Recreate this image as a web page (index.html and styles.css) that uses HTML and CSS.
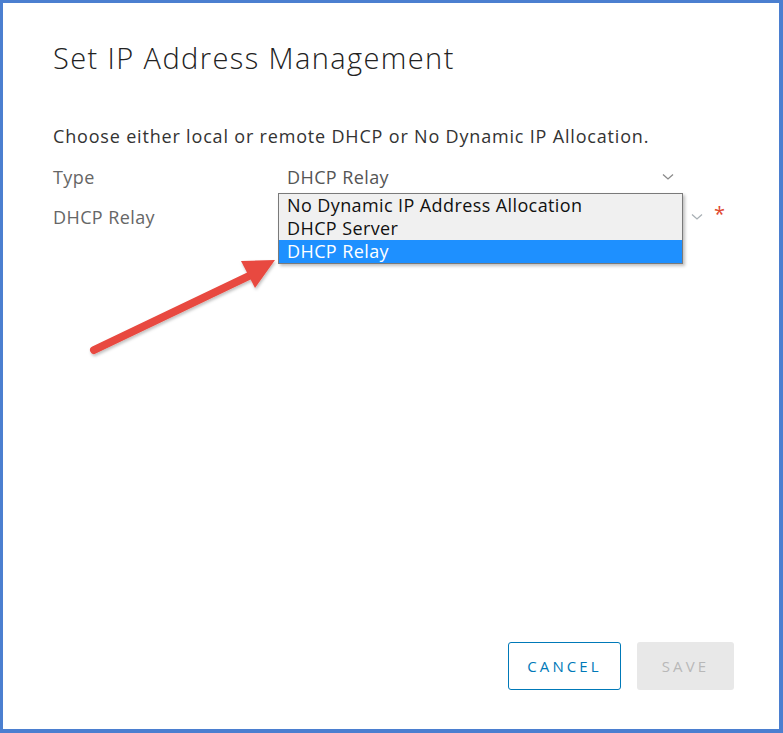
FILE: index.html
```html
<!DOCTYPE html>
<html>
<head>
<meta charset="utf-8">
<link rel="stylesheet" href="styles.css">
</head>
<body>
<div class="window">
  <h1 class="title">Set IP Address Management</h1>
  <p class="intro">Choose either local or remote DHCP or No Dynamic IP Allocation.</p>
  <div class="form">
    <div class="row">
      <span class="label">Type</span>
      <div class="select select-type">
        <span class="value">DHCP Relay</span>
        <svg class="chev" width="12" height="8" viewBox="0 0 12 8"><path d="M1 1.5 L6 6 L11 1.5" fill="none" stroke="#8a8a8a" stroke-width="1.3"/></svg>
      </div>
    </div>
    <div class="row">
      <span class="label">DHCP Relay</span>
      <div class="select select-relay">
        <span class="value"></span>
        <svg class="chev" width="12" height="8" viewBox="0 0 12 8"><path d="M1 1.5 L6 6 L11 1.5" fill="none" stroke="#a9b0b5" stroke-width="1.3"/></svg>
      </div>
      <span class="req">*</span>
    </div>
    <ul class="dropdown">
      <li>No Dynamic IP Address Allocation</li>
      <li>DHCP Server</li>
      <li class="sel">DHCP Relay</li>
    </ul>
  </div>
  <svg class="arrow" width="210" height="110" viewBox="0 0 210 110">
    <defs>
      <filter id="sh" x="-20%" y="-20%" width="140%" height="140%">
        <feDropShadow dx="1" dy="2" stdDeviation="1.5" flood-color="#000" flood-opacity="0.25"/>
      </filter>
    </defs>
    <g filter="url(#sh)">
      <line x1="21" y1="97" x2="178" y2="22" stroke="#e8483f" stroke-width="8" stroke-linecap="round"/>
      <polygon points="168,8 202,7 182,35" fill="#e8483f"/>
    </g>
  </svg>
  <div class="actions">
    <button class="btn cancel">CANCEL</button>
    <button class="btn save">SAVE</button>
  </div>
</div>
</body>
</html>
```
FILE: styles.css
```css
* { box-sizing: border-box; }
html, body { margin: 0; padding: 0; background: #fff; }
body { font-family: "Open Sans", "Lato", sans-serif; }
.window {
  position: relative;
  width: 783px;
  height: 733px;
  border-style: solid;
  border-color: #4b7fd0;
  border-width: 3px 4px 4px 3px;
  padding: 0 0 0 50px;
  display: flex;
  flex-direction: column;
}
.title {
  margin: 35px 0 0 0;
  font-size: 29px;
  font-weight: 300;
  color: #222;
  line-height: 40px;
  letter-spacing: 1.4px;
}
.intro {
  margin: 47px 0 0 0;
  font-size: 18px;
  color: #333;
  line-height: 22px;
  letter-spacing: 0.82px;
}
.form { position: relative; margin-top: 10px; }
.row {
  display: flex;
  align-items: center;
  height: 40px;
}
.label {
  width: 234px;
  font-size: 18px;
  color: #666;
  letter-spacing: 0.4px;
}
.select {
  display: flex;
  align-items: center;
  height: 40px;
  position: relative;
}
.select-type { width: 387px; }
.select-relay { width: 416px; }
.value {
  flex: 1;
  font-size: 18px;
  color: #555;
  letter-spacing: 0.4px;
}
.chev { flex: none; }
.req {
  color: #e0482f;
  font-size: 20px;
  margin-left: 11px;
  margin-top: -8px;
}
.dropdown {
  position: absolute;
  left: 225px;
  top: 36px;
  width: 405px;
  margin: 0;
  padding: 0;
  list-style: none;
  background: #f0f0f0;
  border: 1px solid #7a7a7a;
  box-shadow: 2px 2px 3px rgba(0,0,0,0.25);
}
.dropdown li {
  height: 23px;
  line-height: 22px;
  padding-left: 8px;
  font-size: 18px;
  color: #111;
  letter-spacing: 0.4px;
}
.dropdown li.sel { background: #1e90ff; color: #fff; }
.arrow {
  position: absolute;
  left: 70px;
  top: 250px;
}
.actions {
  margin-top: auto;
  margin-bottom: 39px;
  display: flex;
  gap: 16px;
  justify-content: flex-end;
  padding-right: 45px;
}
.btn {
  height: 48px;
  border-radius: 3px;
  font-family: "Open Sans", sans-serif;
  font-size: 15px;
  letter-spacing: 3.1px;
  font-weight: 500;
  padding: 0;
}
.cancel {
  width: 113px;
  background: #fff;
  border: 1px solid #0079b8;
  color: #0079b8;
}
.save {
  width: 97px;
  background: #e8e8e8;
  border: none;
  color: #b8b8b8;
}
```
